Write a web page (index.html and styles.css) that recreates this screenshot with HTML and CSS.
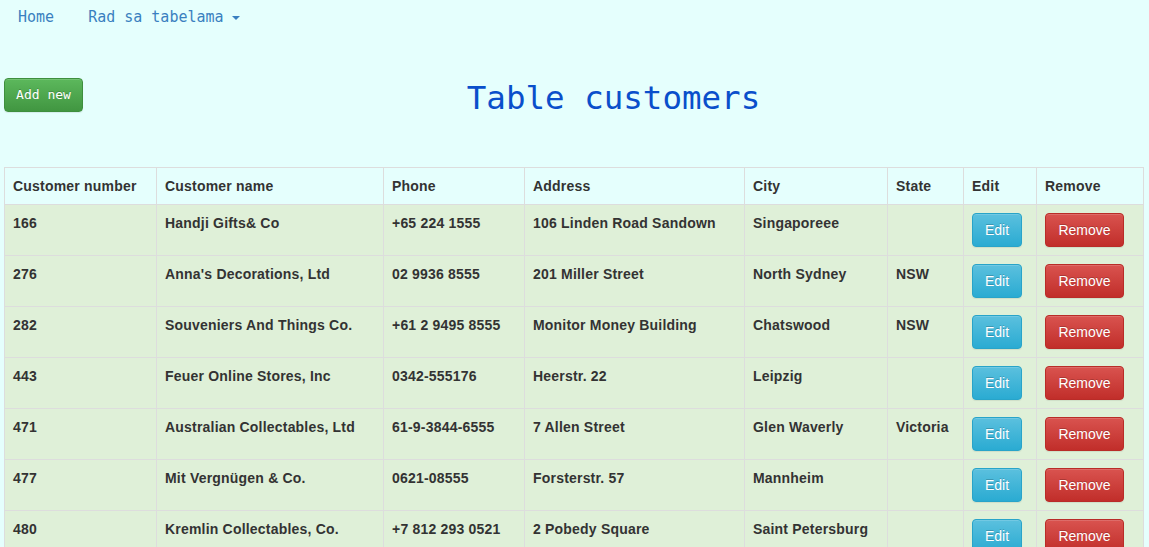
FILE: index.html
```html
<!DOCTYPE html>
<html>
<head>
<meta charset="utf-8">
<link rel="stylesheet" href="styles.css">
</head>
<body>
<nav class="navbar">
  <a class="nav-link home" href="#">Home</a>
  <a class="nav-link drop" href="#">Rad sa tabelama <span class="caret"></span></a>
</nav>
<div class="page">
  <div class="head-row">
    <button class="btn btn-success">Add new</button>
    <h1 class="title">Table customers</h1>
  </div>
  <table class="grid">
    <thead>
      <tr>
        <th class="c1">Customer number</th>
        <th class="c2">Customer name</th>
        <th class="c3">Phone</th>
        <th class="c4">Address</th>
        <th class="c5">City</th>
        <th class="c6">State</th>
        <th class="c7">Edit</th>
        <th class="c8">Remove</th>
      </tr>
    </thead>
    <tbody>
      <tr><td>166</td><td>Handji Gifts&amp; Co</td><td>+65 224 1555</td><td>106 Linden Road Sandown</td><td>Singaporeee</td><td></td><td><button class="btn btn-info">Edit</button></td><td><button class="btn btn-danger">Remove</button></td></tr>
      <tr><td>276</td><td>Anna's Decorations, Ltd</td><td>02 9936 8555</td><td>201 Miller Street</td><td>North Sydney</td><td>NSW</td><td><button class="btn btn-info">Edit</button></td><td><button class="btn btn-danger">Remove</button></td></tr>
      <tr><td>282</td><td>Souveniers And Things Co.</td><td>+61 2 9495 8555</td><td>Monitor Money Building</td><td>Chatswood</td><td>NSW</td><td><button class="btn btn-info">Edit</button></td><td><button class="btn btn-danger">Remove</button></td></tr>
      <tr><td>443</td><td>Feuer Online Stores, Inc</td><td>0342-555176</td><td>Heerstr. 22</td><td>Leipzig</td><td></td><td><button class="btn btn-info">Edit</button></td><td><button class="btn btn-danger">Remove</button></td></tr>
      <tr><td>471</td><td>Australian Collectables, Ltd</td><td>61-9-3844-6555</td><td>7 Allen Street</td><td>Glen Waverly</td><td>Victoria</td><td><button class="btn btn-info">Edit</button></td><td><button class="btn btn-danger">Remove</button></td></tr>
      <tr><td>477</td><td>Mit Vergnügen &amp; Co.</td><td>0621-08555</td><td>Forsterstr. 57</td><td>Mannheim</td><td></td><td><button class="btn btn-info">Edit</button></td><td><button class="btn btn-danger">Remove</button></td></tr>
      <tr><td>480</td><td>Kremlin Collectables, Co.</td><td>+7 812 293 0521</td><td>2 Pobedy Square</td><td>Saint Petersburg</td><td></td><td><button class="btn btn-info">Edit</button></td><td><button class="btn btn-danger">Remove</button></td></tr>
    </tbody>
  </table>
</div>
</body>
</html>
```
FILE: styles.css
```css
html, body {
  margin: 0;
  padding: 0;
  background: #e5fffd;
  font-family: "Liberation Sans", Arial, sans-serif;
  font-size: 14px;
  color: #333;
}

.navbar {
  display: flex;
  align-items: center;
  height: 34px;
  padding-left: 18px;
}

.nav-link {
  font-family: "DejaVu Sans Mono", monospace;
  font-size: 15px;
  color: #3a7fc0;
  text-decoration: none;
  line-height: 20px;
  display: flex;
  align-items: center;
}

.home {
  margin-right: 34px;
}

.caret {
  display: inline-block;
  width: 0;
  height: 0;
  margin-left: 8px;
  margin-top: 2px;
  border-top: 4px solid #3a7fc0;
  border-left: 4px solid transparent;
  border-right: 4px solid transparent;
}

.page {
  padding: 0 5px 0 4px;
}

.head-row {
  display: flex;
  align-items: flex-start;
  padding-top: 44px;
  height: 89px;
}

.title {
  flex: 1;
  margin: 0;
  text-align: center;
  font-family: "DejaVu Sans Mono", monospace;
  font-weight: normal;
  font-size: 32.5px;
  line-height: 40px;
  color: #0a4fcb;
}

.btn {
  display: inline-block;
  height: 34px;
  padding: 6px 12px;
  font-family: "Liberation Sans", Arial, sans-serif;
  font-size: 14px;
  line-height: 20px;
  color: #fff;
  border-radius: 4px;
  border: 1px solid transparent;
  box-sizing: border-box;
  box-shadow: inset 0 1px 0 rgba(255,255,255,.15), 0 1px 1px rgba(0,0,0,.075);
  text-shadow: 0 -1px 0 rgba(0,0,0,.2);
  letter-spacing: 0;
  cursor: pointer;
}

.btn-success {
  font-family: "DejaVu Sans Mono", monospace;
  font-size: 13px;
  padding: 6px 11px;
  width: 79px;
  background: linear-gradient(to bottom, #5cb85c 0%, #419641 100%);
  border-color: #3e8f3e;
}

.btn-info {
  background: linear-gradient(to bottom, #5bc0de 0%, #2aabd2 100%);
  border-color: #28a4c9;
}

.btn-danger {
  width: 79px;
  background: linear-gradient(to bottom, #d9534f 0%, #c12e2a 100%);
  border-color: #b92c28;
}

.grid {
  width: 1140px;
  border-collapse: collapse;
  border: 1px solid #dddddd;
  table-layout: fixed;
}

.grid th, .grid td {
  border: 1px solid #dddddd;
  padding: 8px;
  line-height: 20px;
  text-align: left;
  vertical-align: top;
  font-weight: bold;
  white-space: nowrap;
  letter-spacing: 0.2px;
}

.grid th {
  background: #e5fffd;
  height: 20px;
}

.grid td {
  background: #dff0d8;
  height: 34px;
}

.c1 { width: 135px; }
.c2 { width: 210px; }
.c3 { width: 124px; }
.c4 { width: 203px; }
.c5 { width: 126px; }
.c6 { width: 59px; }
.c7 { width: 56px; }
.c8 { width: 90px; }
```
